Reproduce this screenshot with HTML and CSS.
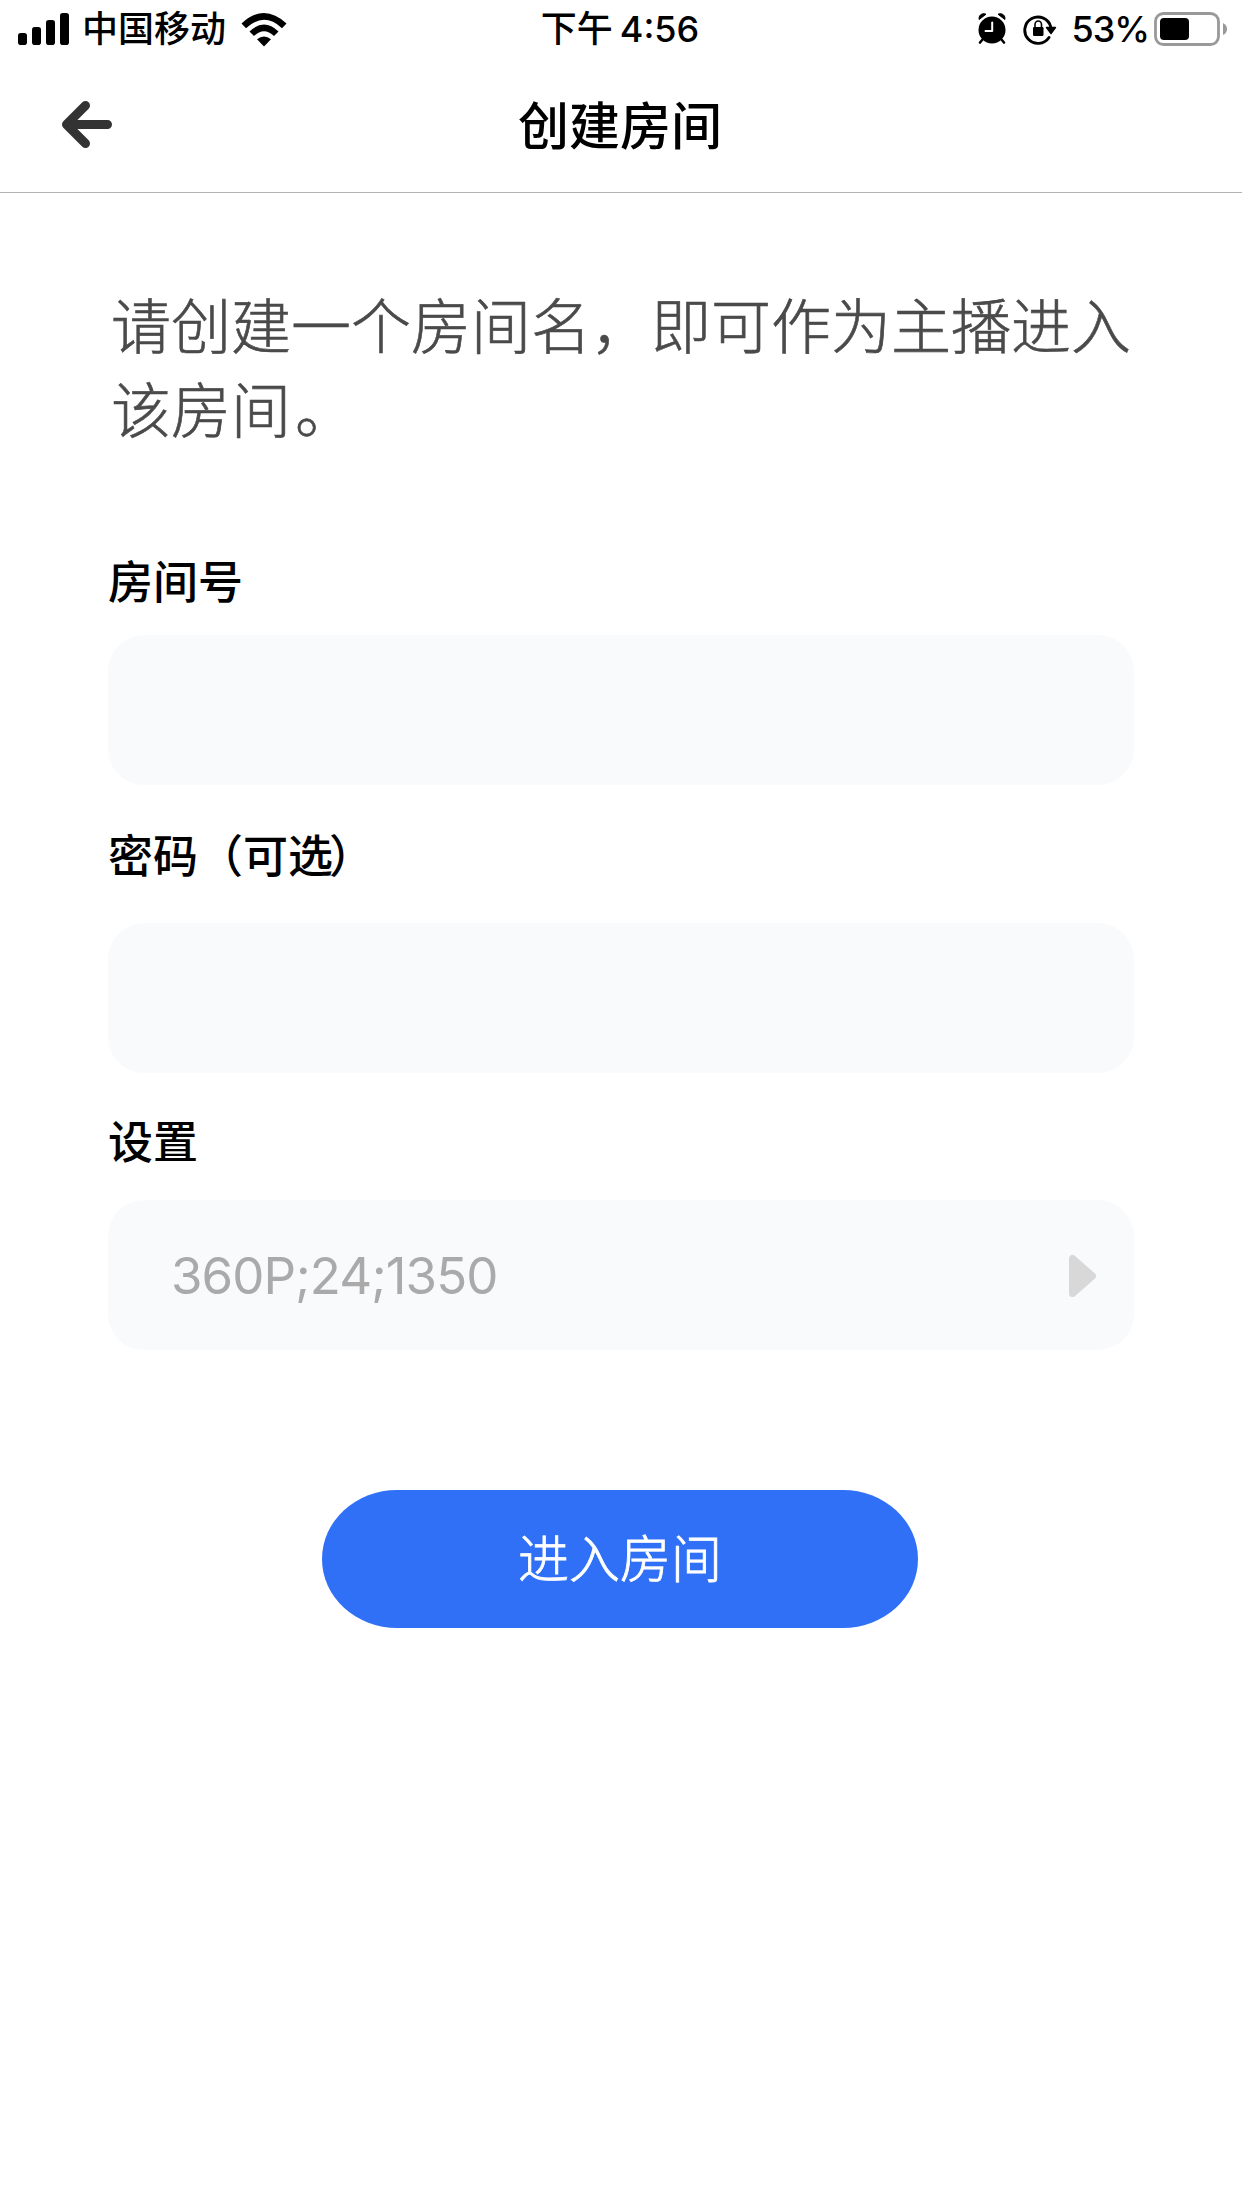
FILE: index.html
```html
<!DOCTYPE html>
<html lang="zh-CN">
<head>
<meta charset="utf-8">
<title>创建房间</title>
<link rel="stylesheet" href="styles.css">
</head>
<body>
<div class="status">
  <div class="status-left">
    <svg class="signal" width="52" height="34" viewBox="0 0 52 34">
      <rect x="0" y="20" width="9" height="12" rx="2.8"/><rect x="14" y="14" width="9" height="18" rx="2.8"/><rect x="28" y="7" width="9" height="25" rx="2.8"/><rect x="42" y="0" width="9" height="32" rx="2.8"/>
    </svg>
    <span class="carrier">中国移动</span>
    <svg class="wifi" width="46" height="34" viewBox="0 0 46 34">
      <path d="M0.5 10.5Q23 -10.5 45.500 10.500L41 15.200Q23 -1.500 5 15.200Z"/>
      <path d="M8.500 18.500Q23 4.500 37.500 18.500L33 23Q23 13.500 13 23Z"/>
      <path d="M16 26.300Q23 20.500 30 26.300L23 33.500Z"/>
    </svg>
  </div>
  <div class="status-time"><span>下午</span><span class="clock">4:56</span></div>
  <div class="status-right">
    <svg width="28" height="32" viewBox="0 0 28 32">
      <circle cx="14" cy="17" r="13.500"/>
      <path d="M1.200 6.500C.2 3 3.500-.5 8 1.200ZM26.800 6.500C27.800 3 24.500-.5 20 1.200Z" stroke="#000" stroke-linejoin="round"/>
      <path d="M5 26L2 29.500M23 26L26 29.500" stroke="#000" stroke-width="2.600" stroke-linecap="round"/>
      <path d="M14.200 9.500V18H7.500" fill="none" stroke="#fff" stroke-width="2" stroke-linecap="round" stroke-linejoin="round"/>
    </svg>
    <svg class="lock" width="34" height="32" viewBox="0 0 34 32">
      <path d="M26 23.500A13.200 13.200 0 1 1 27.800 13" fill="none" stroke="#000" stroke-width="2.900" stroke-linecap="round"/>
      <path d="M23.500 13.500H32.500L28 19.500Z" stroke="#000" stroke-width="1.400" stroke-linejoin="round"/>
      <rect x="10" y="13" width="10.500" height="9" rx="1.300"/>
      <path d="M12 14V10.500a3.200 3.500 0 0 1 6.500 0V14" fill="none" stroke="#000" stroke-width="1.600"/>
    </svg>
    <span class="percent">53%</span>
    <svg class="battery" width="74" height="36" viewBox="0 0 74 36">
      <rect x="1.500" y="1.500" width="63" height="31" rx="8" fill="none" stroke="#999" stroke-width="2.800"/>
      <rect x="6" y="6" width="29" height="22" rx="4"/>
      <path d="M69 11Q73 13 73 17T69 23Z" fill="#999"/>
    </svg>
  </div>
</div>
<header class="header">
  <svg class="back" width="52" height="50" viewBox="0 0 52 50">
    <path d="M25.500 5.500L6.500 24.500L25.500 43.500M8 24.500H47.500" fill="none" stroke="#333" stroke-width="9" stroke-linecap="round" stroke-linejoin="round"/>
  </svg>
  <h1 class="title">创建房间</h1>
</header>
<main class="form">
  <p class="intro">请创建一个房间名，即可作为主播进入<span class="tail">该房间</span>。</p>
  <div class="group group-room"><div class="label">房间号</div><div class="field"></div></div>
  <div class="group group-password"><div class="label">密码（可<span class="tight">选</span>）</div><div class="field"></div></div>
  <div class="group group-settings"><div class="label">设置</div>
    <div class="field">
      <span class="value">360P;24;1350</span>
      <svg width="29" height="44" viewBox="0 0 29 44"><path d="M4.500 4.500V39.500L24.500 22Z" fill="#d8d8d8" stroke="#d8d8d8" stroke-width="7" stroke-linejoin="round"/></svg>
    </div>
  </div>
  <button class="enter">进入房间</button>
</main>
</body>
</html>
```
FILE: styles.css
```css
* { box-sizing: border-box; }
body {
  margin: 0;
  min-height: 2208px;
  background: #fff;
  color: #000;
  font-family: "Inter", "Noto Sans CJK SC", sans-serif;
}
svg { display: block; flex: none; }
.status {
  display: grid;
  grid-template-columns: 1fr auto 1fr;
  height: 60px;
  padding: 0 14px 0 18px;
  font-size: 36px;
  font-weight: 500;
  line-height: 59px;
  white-space: nowrap;
}
.status-left, .status-time, .status-right { display: flex; align-items: flex-start; }
.signal { margin-top: 13px; }
.carrier { margin-left: 12px; }
.wifi { margin: 13px 0 0 15px; }
.status-time { padding-right: 6px; }
.clock { margin-left: 7px; }
.status-right { justify-content: flex-end; }
.status-right svg { margin-top: 13px; }
.status-right .lock { margin: 14px 0 0 17px; }
.percent { margin-left: 14px; font-weight: 450; letter-spacing: -1px; }
.status-right .battery { margin: 12px 0 0 5px; }
.header {
  display: grid;
  grid-template-columns: 62px 1fr 62px;
  height: 133px;
  border-bottom: 1px solid #b2b2b2;
}
.back { margin: 40px 0 0 60px; }
.title {
  margin: 0;
  padding: 4px 2px 0 0;
  font-size: 51px;
  font-weight: 500;
  line-height: 126px;
  text-align: center;
}
.form { padding: 92px 108px 0; }
.intro {
  margin: 0 0 98px 3px;
  width: 1024px;
  color: #4a4a4a;
  font-size: 60px;
  font-weight: 300;
  line-height: 84px;
  -webkit-text-stroke: 0.6px #4a4a4a;
}
.tail { margin-right: 4px; }
.tight { margin-right: -4px; }
.group { display: flex; flex-direction: column; }
.group-room { gap: 20px; }
.group-password { gap: 34px; margin-top: 40px; }
.group-settings { gap: 25px; margin-top: 38px; }
.label { height: 64px; font-size: 45px; font-weight: 500; line-height: 64px; }
.field {
  display: flex;
  align-items: center;
  justify-content: space-between;
  height: 150px;
  padding: 2px 37px 0 63px;
  border-radius: 36px;
  background: #f9fafc;
}
.value { color: #aaa; font-size: 51px; line-height: 60px; letter-spacing: -0.9px; }
.enter {
  display: block;
  width: 596px;
  height: 138px;
  margin: 140px 0 0 214px;
  padding: 0 0 5px;
  border: 0;
  border-radius: 75px / 69px;
  background: #2f70f7;
  color: #fff;
  font: 300 51px/1 "Noto Sans CJK SC", sans-serif;
  -webkit-text-stroke: 0.8px #fff;
}
```
